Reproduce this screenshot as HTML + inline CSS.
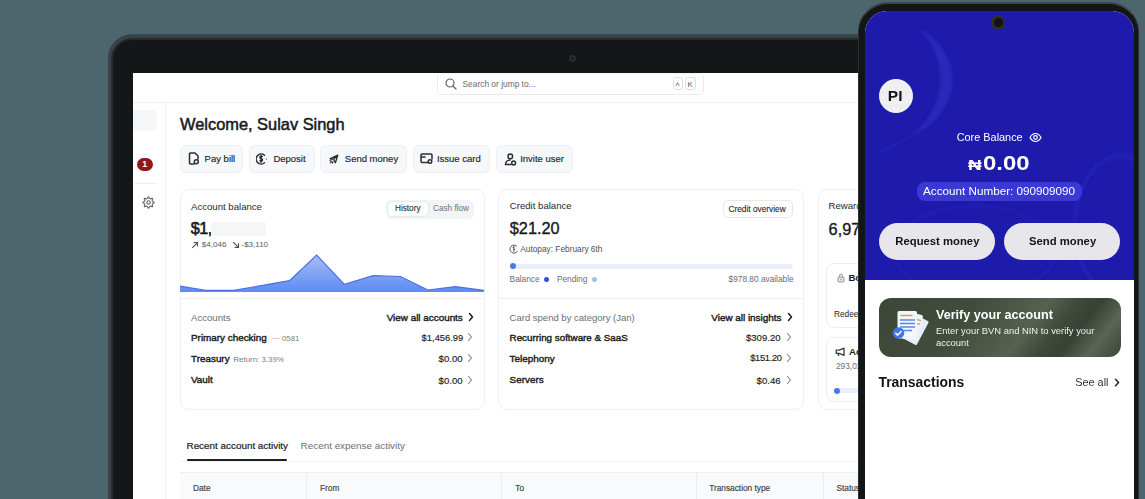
<!DOCTYPE html>
<html><head><meta charset="utf-8"><style>
html,body{margin:0;padding:0;}
body{width:1145px;height:499px;overflow:hidden;position:relative;background:#4d656c;font-family:"Liberation Sans",sans-serif;}
.r{position:absolute;}
.t{position:absolute;line-height:1;white-space:nowrap;}
</style></head><body>
<div class="r" style="left:108px;top:35px;width:900px;height:600px;border-radius:24px 24px 0 0;background:#3c4145;box-shadow:0 -0.6px 0 #27305a;"></div>
<div class="r" style="left:110.8px;top:38.3px;width:900px;height:600px;border-radius:21px 21px 0 0;background:#232c2d;"></div>
<div class="r" style="left:113px;top:40.3px;width:900px;height:600px;border-radius:19px 19px 0 0;background:#131718;"></div>
<div class="r" style="left:568.5px;top:54.5px;width:7px;height:7px;border-radius:50%;background:#2a2e30;"></div>
<div class="r" style="left:570.5px;top:56.5px;width:3px;height:3px;border-radius:50%;background:#151819;"></div>
<div class="r" style="left:133px;top:73px;width:850px;height:500px;background:#fff;"></div>
<div class="r" style="left:133px;top:102px;width:1000px;height:1px;background:#eef0f2;"></div>
<div class="r" style="left:436.5px;top:73px;width:267.5px;height:21.5px;border:1px solid #e8eaed;border-top-color:#f4f5f6;border-radius:5px;background:#fff;box-sizing:border-box;"></div>
<svg class="r" style="left:444.5px;top:78px" width="12" height="12" viewBox="0 0 12 12"><circle cx="5" cy="5" r="4" fill="none" stroke="#5f646a" stroke-width="1.2"/><path d="M8 8 L11 11" stroke="#5f646a" stroke-width="1.3" stroke-linecap="round"/></svg>
<div class="t " style="left:462.50px;top:79.99px;font-size:8.4px;font-weight:400;color:#666b71;">Search or jump to...</div>
<div class="r" style="left:673px;top:77px;width:9.5px;height:13px;border:1px solid #dcdfe3;border-radius:3px;box-sizing:border-box;"></div>
<div class="t " style="left:675.60px;top:82.30px;font-size:8.5px;font-weight:400;color:#555a60;">^</div>
<div class="r" style="left:684.5px;top:77px;width:11px;height:13px;border:1px solid #dcdfe3;border-radius:3px;box-sizing:border-box;"></div>
<div class="t " style="left:687.40px;top:80.51px;font-size:7.9px;font-weight:400;color:#555a60;">K</div>
<div class="r" style="left:165px;top:102px;width:1px;height:400px;background:#f0f1f3;"></div>
<div class="r" style="left:133px;top:110px;width:24px;height:21px;background:#f6f7f8;border-radius:0 5px 5px 0;"></div>
<div class="r" style="left:137px;top:158px;width:16px;height:13px;background:#8e1a15;border-radius:7px;"></div>
<div class="t " style="left:142.30px;top:160.06px;font-size:8.9px;font-weight:700;color:#ffffff;">1</div>
<div class="r" style="left:134px;top:183px;width:23px;height:1px;background:#eef0f2;"></div>
<svg class="r" style="left:141.9px;top:196.2px" width="13" height="13" viewBox="0 0 13 13"><path fill="none" stroke="#63686e" stroke-width="1.1" stroke-linejoin="round" d="M10.72 5.66 L12.07 5.93 L12.07 7.07 L10.72 7.34 L10.08 8.89 L10.84 10.04 L10.04 10.84 L8.89 10.08 L7.34 10.72 L7.07 12.07 L5.93 12.07 L5.66 10.72 L4.11 10.08 L2.96 10.84 L2.16 10.04 L2.92 8.89 L2.28 7.34 L0.93 7.07 L0.93 5.93 L2.28 5.66 L2.92 4.11 L2.16 2.96 L2.96 2.16 L4.11 2.92 L5.66 2.28 L5.93 0.93 L7.07 0.93 L7.34 2.28 L8.89 2.92 L10.04 2.16 L10.84 2.96 L10.08 4.11Z"/><circle cx="6.5" cy="6.5" r="1.7" fill="none" stroke="#63686e" stroke-width="1.1"/></svg>
<div class="t " style="left:180.00px;top:115.71px;font-size:16.4px;font-weight:400;color:#17191c;-webkit-text-stroke:0.5px #17191c;">Welcome, Sulav Singh</div>
<div class="r" style="left:179.5px;top:145px;width:63px;height:27.5px;background:#f7f8f9;border:1px solid #eceef0;border-radius:6px;box-sizing:border-box;"></div>
<div class="r" style="left:248.5px;top:145px;width:66px;height:27.5px;background:#f7f8f9;border:1px solid #eceef0;border-radius:6px;box-sizing:border-box;"></div>
<div class="r" style="left:320px;top:145px;width:87px;height:27.5px;background:#f7f8f9;border:1px solid #eceef0;border-radius:6px;box-sizing:border-box;"></div>
<div class="r" style="left:412.5px;top:145px;width:77.5px;height:27.5px;background:#f7f8f9;border:1px solid #eceef0;border-radius:6px;box-sizing:border-box;"></div>
<div class="r" style="left:495.5px;top:145px;width:77.5px;height:27.5px;background:#f7f8f9;border:1px solid #eceef0;border-radius:6px;box-sizing:border-box;"></div>
<div class="t " style="left:204.60px;top:153.65px;font-size:9.5px;font-weight:400;color:#22262a;-webkit-text-stroke:0.15px #22262a;">Pay bill</div>
<div class="t " style="left:273.40px;top:153.65px;font-size:9.5px;font-weight:400;color:#22262a;-webkit-text-stroke:0.15px #22262a;">Deposit</div>
<div class="t " style="left:344.80px;top:153.65px;font-size:9.5px;font-weight:400;color:#22262a;-webkit-text-stroke:0.15px #22262a;">Send money</div>
<div class="t " style="left:436.90px;top:153.65px;font-size:9.5px;font-weight:400;color:#22262a;-webkit-text-stroke:0.15px #22262a;">Issue card</div>
<div class="t " style="left:520.20px;top:153.65px;font-size:9.5px;font-weight:400;color:#22262a;-webkit-text-stroke:0.15px #22262a;">Invite user</div>
<svg class="r" style="left:188px;top:152px" width="12" height="13" viewBox="0 0 12 13"><path fill="none" stroke="#2a2e33" stroke-width="1.5" stroke-linecap="round" stroke-linejoin="round" d="M6 12H2.5a1 1 0 0 1-1-1V2a1 1 0 0 1 1-1h4.5l3 3v3"/><circle cx="8.3" cy="9.8" r="2" fill="none" stroke="#2a2e33" stroke-width="1.5" stroke-linecap="round" stroke-linejoin="round"/></svg>
<svg class="r" style="left:256px;top:153px" width="12" height="12" viewBox="0 0 12 12"><path fill="none" stroke="#2a2e33" stroke-width="1.5" stroke-linecap="round" stroke-linejoin="round" d="M8.5 2.2A5 5 0 1 0 8.5 9.8"/><path fill="none" stroke="#2a2e33" stroke-width="1.5" stroke-linecap="round" stroke-linejoin="round" d="M6.2 3.5c-1.2-.4-2.3.1-2.3.9 0 1.6 2.6 1 2.6 2.6 0 .9-1.2 1.3-2.5.8M5 2.6v6.6"/><circle cx="10.5" cy="6" r=".6" fill="#2a2e33"/></svg>
<svg class="r" style="left:329px;top:154px" width="10" height="10" viewBox="0 0 10 10"><path fill="none" stroke="#2a2e33" stroke-width="1.3" stroke-linejoin="round" d="M1.2 4.6L8.8 1.2 6.4 8.8 4.6 5.4z M4.6 5.4L8.8 1.2"/><path fill="none" stroke="#2a2e33" stroke-width="1.2" stroke-linecap="round" d="M1.3 8.7l1.6-1.6M3.2 9l.9-.9M1 6.6l.9-.9"/></svg>
<svg class="r" style="left:420px;top:153px" width="13" height="11" viewBox="0 0 13 11"><path fill="none" stroke="#2a2e33" stroke-width="1.5" stroke-linecap="round" stroke-linejoin="round" d="M8 9.5H2a1 1 0 0 1-1-1v-6.5a1 1 0 0 1 1-1h9a1 1 0 0 1 1 1v4 M1 4h4"/><circle cx="10" cy="8.5" r="1.8" fill="none" stroke="#2a2e33" stroke-width="1.5" stroke-linecap="round" stroke-linejoin="round"/></svg>
<svg class="r" style="left:503.5px;top:152.5px" width="13" height="13" viewBox="0 0 13 13"><circle cx="6.3" cy="3.4" r="2.3" fill="none" stroke="#2a2e33" stroke-width="1.5" stroke-linecap="round" stroke-linejoin="round"/><path fill="none" stroke="#2a2e33" stroke-width="1.5" stroke-linecap="round" stroke-linejoin="round" d="M1.5 11.5c0-2.6 1.9-4.6 4.6-4.6"/><circle cx="9.6" cy="10" r="1.9" fill="none" stroke="#2a2e33" stroke-width="1.5" stroke-linecap="round" stroke-linejoin="round"/><path fill="none" stroke="#2a2e33" stroke-width="1.5" stroke-linecap="round" stroke-linejoin="round" d="M1.5 11.5h5.5"/></svg>
<div class="r" style="left:179.5px;top:188.5px;width:305px;height:221px;background:#fff;border:1px solid #eef0f2;border-radius:9px;box-sizing:border-box;"></div>
<div class="r" style="left:498px;top:188.5px;width:305.5px;height:221px;background:#fff;border:1px solid #eef0f2;border-radius:9px;box-sizing:border-box;"></div>
<div class="r" style="left:817.5px;top:188.5px;width:280px;height:221px;background:#fff;border:1px solid #eef0f2;border-radius:9px;box-sizing:border-box;"></div>
<div class="r" style="left:180.5px;top:298px;width:303px;height:1px;background:#eef0f2;"></div>
<div class="r" style="left:499px;top:298px;width:303.5px;height:1px;background:#eef0f2;"></div>
<div class="t " style="left:191.00px;top:201.57px;font-size:9.6px;font-weight:400;color:#26292d;">Account balance</div>
<div class="r" style="left:385.5px;top:199.5px;width:88px;height:19px;background:#f3f4f6;border-radius:6px;"></div>
<div class="r" style="left:386.5px;top:200.5px;width:42.5px;height:16.9px;background:#fff;border:1px solid #e6e8eb;border-radius:5px;box-sizing:border-box;"></div>
<div class="t " style="left:395.00px;top:205.45px;font-size:8.2px;font-weight:400;color:#2a2d31;-webkit-text-stroke:0.1px #2a2d31;">History</div>
<div class="t " style="left:433.00px;top:205.45px;font-size:8.2px;font-weight:400;color:#6d7177;">Cash flow</div>
<div class="t " style="left:190.80px;top:220.39px;font-size:16.3px;font-weight:400;color:#17191c;letter-spacing:-0.6px;-webkit-text-stroke:0.55px #17191c;">$1,</div>
<div class="r" style="left:211px;top:222.2px;width:55px;height:13.6px;background:#f5f6f7;"></div>
<svg class="r" style="left:191px;top:240.5px" width="8" height="8" viewBox="0 0 8 8"><path d="M1.2 6.8L6.5 1.5M2.5 1.5h4v4" fill="none" stroke="#4f5358" stroke-width="1.1"/></svg>
<div class="t " style="left:201.80px;top:240.64px;font-size:8.1px;font-weight:400;color:#55595e;">$4,046</div>
<svg class="r" style="left:231.5px;top:240.5px" width="8" height="8" viewBox="0 0 8 8"><path d="M1.2 1.2L6.5 6.5M2.5 6.5h4v-4" fill="none" stroke="#4f5358" stroke-width="1.1"/></svg>
<div class="t " style="left:241.50px;top:240.72px;font-size:8.0px;font-weight:400;color:#55595e;">-$3,110</div>
<svg class="r" style="left:180px;top:250px" width="304" height="42" viewBox="0 0 304 42"><defs><linearGradient id="g1" x1="0" y1="0" x2="0" y2="1"><stop offset="0" stop-color="#a7bdf8"/><stop offset="1" stop-color="#5d8bf1"/></linearGradient></defs><path d="M0.0 36.2 L25.7 40.4 L53.7 40.4 L109.6 30.6 L136.6 5.0 L164.4 34.3 L193.2 25.7 L220.5 26.5 L247.9 40.0 L275.3 36.6 L304.0 40.4 L304 42 L0 42 Z" fill="url(#g1)"/><path d="M0.0 36.2 L25.7 40.4 L53.7 40.4 L109.6 30.6 L136.6 5.0 L164.4 34.3 L193.2 25.7 L220.5 26.5 L247.9 40.0 L275.3 36.6 L304.0 40.4" fill="none" stroke="#4b70e4" stroke-width="1.2"/></svg>
<div class="t " style="left:191.00px;top:312.67px;font-size:9.6px;font-weight:400;color:#6a6e74;">Accounts</div>
<div class="t " style="left:386.70px;top:312.61px;font-size:9.9px;font-weight:400;color:#1b1d20;-webkit-text-stroke:0.42px #1b1d20;">View all accounts</div>
<div class="t " style="left:191.00px;top:332.81px;font-size:9.9px;font-weight:400;color:#1b1d20;-webkit-text-stroke:0.42px #1b1d20;">Primary checking</div>
<div class="t " style="left:271.50px;top:334.51px;font-size:7.9px;font-weight:400;color:#7a7e84;letter-spacing:-0.6px;">&middot;&middot;&middot;&middot;</div>
<div class="t " style="left:282.00px;top:334.59px;font-size:7.8px;font-weight:400;color:#7a7e84;">0581</div>
<div class="t " style="left:421.60px;top:333.24px;font-size:9.4px;font-weight:400;color:#1b1d20;-webkit-text-stroke:0.15px #1b1d20;">$1,456.99</div>
<div class="t " style="left:191.00px;top:353.81px;font-size:9.9px;font-weight:400;color:#1b1d20;-webkit-text-stroke:0.42px #1b1d20;">Treasury</div>
<div class="t " style="left:233.40px;top:355.51px;font-size:7.9px;font-weight:400;color:#7a7e84;">Return: 3.39%</div>
<div class="t " style="left:438.60px;top:354.07px;font-size:9.6px;font-weight:400;color:#1b1d20;-webkit-text-stroke:0.15px #1b1d20;">$0.00</div>
<div class="t " style="left:191.00px;top:375.41px;font-size:9.9px;font-weight:400;color:#1b1d20;-webkit-text-stroke:0.42px #1b1d20;">Vault</div>
<div class="t " style="left:438.60px;top:375.67px;font-size:9.6px;font-weight:400;color:#1b1d20;-webkit-text-stroke:0.15px #1b1d20;">$0.00</div>
<svg class="r" style="left:467.5px;top:312.2px" width="6" height="10" viewBox="0 0 6 10"><path d="M1.5 1.5L4.5 5 1.5 8.5" fill="none" stroke="#1b1d20" stroke-width="1.5" stroke-linecap="round" stroke-linejoin="round"/></svg>
<svg class="r" style="left:467px;top:332.4px" width="6" height="10" viewBox="0 0 6 10"><path d="M1.5 1.5L4.5 5 1.5 8.5" fill="none" stroke="#7d8187" stroke-width="1.1" stroke-linecap="round" stroke-linejoin="round"/></svg>
<svg class="r" style="left:467px;top:353.4px" width="6" height="10" viewBox="0 0 6 10"><path d="M1.5 1.5L4.5 5 1.5 8.5" fill="none" stroke="#7d8187" stroke-width="1.1" stroke-linecap="round" stroke-linejoin="round"/></svg>
<svg class="r" style="left:467px;top:375px" width="6" height="10" viewBox="0 0 6 10"><path d="M1.5 1.5L4.5 5 1.5 8.5" fill="none" stroke="#7d8187" stroke-width="1.1" stroke-linecap="round" stroke-linejoin="round"/></svg>
<div class="t " style="left:509.80px;top:201.07px;font-size:9.6px;font-weight:400;color:#26292d;">Credit balance</div>
<div class="r" style="left:722.5px;top:199.5px;width:70px;height:18.5px;background:#fff;border:1px solid #e6e8eb;border-radius:5px;box-sizing:border-box;"></div>
<div class="t " style="left:728.50px;top:205.17px;font-size:8.3px;font-weight:400;color:#22262a;-webkit-text-stroke:0.1px #22262a;">Credit overview</div>
<div class="t " style="left:509.80px;top:220.29px;font-size:16.3px;font-weight:400;color:#17191c;-webkit-text-stroke:0.35px #17191c;">$21.20</div>
<svg class="r" style="left:508.5px;top:244px" width="10" height="10" viewBox="0 0 10 10"><path d="M8 2.5A4 4 0 1 0 8.5 7" fill="none" stroke="#555" stroke-width="1"/><path d="M5.5 3c-.8-.3-1.6 0-1.6.6 0 1.2 1.8.7 1.8 1.8 0 .6-.8.9-1.7.5M4.8 2.2v5.6" fill="none" stroke="#555" stroke-width=".9"/></svg>
<div class="t " style="left:520.30px;top:245.17px;font-size:8.3px;font-weight:400;color:#4b4f55;">Autopay: February 6th</div>
<div class="r" style="left:509.5px;top:263.5px;width:283px;height:5px;background:#e9effd;border-radius:3px;"></div>
<div class="r" style="left:509.5px;top:263px;width:6px;height:6px;background:#4d78e8;border-radius:50%;"></div>
<div class="t " style="left:509.60px;top:275.37px;font-size:8.3px;font-weight:400;color:#6a6e74;">Balance</div>
<div class="r" style="left:543.5px;top:277px;width:5px;height:5px;background:#3350d0;border-radius:50%;"></div>
<div class="t " style="left:556.90px;top:275.37px;font-size:8.3px;font-weight:400;color:#6a6e74;">Pending</div>
<div class="r" style="left:591.8px;top:277px;width:5px;height:5px;background:#a9bdf3;border-radius:50%;"></div>
<div class="t " style="left:728.60px;top:275.37px;font-size:8.3px;font-weight:400;color:#6a6e74;">$978.80 available</div>
<div class="t " style="left:509.60px;top:312.75px;font-size:9.5px;font-weight:400;color:#6a6e74;">Card spend by category (Jan)</div>
<div class="t " style="left:711.30px;top:312.61px;font-size:9.9px;font-weight:400;color:#1b1d20;-webkit-text-stroke:0.42px #1b1d20;">View all insights</div>
<div class="t " style="left:509.60px;top:332.90px;font-size:9.8px;font-weight:400;color:#1b1d20;-webkit-text-stroke:0.42px #1b1d20;">Recurring software &amp; SaaS</div>
<div class="t " style="left:745.90px;top:333.07px;font-size:9.6px;font-weight:400;color:#1b1d20;-webkit-text-stroke:0.15px #1b1d20;">$309.20</div>
<div class="t " style="left:509.60px;top:353.81px;font-size:9.9px;font-weight:400;color:#1b1d20;-webkit-text-stroke:0.42px #1b1d20;">Telephony</div>
<div class="t " style="left:750.20px;top:354.32px;font-size:9.3px;font-weight:400;color:#1b1d20;letter-spacing:-0.3px;-webkit-text-stroke:0.15px #1b1d20;">$151.20</div>
<div class="t " style="left:509.60px;top:375.41px;font-size:9.9px;font-weight:400;color:#1b1d20;-webkit-text-stroke:0.42px #1b1d20;">Servers</div>
<div class="t " style="left:756.60px;top:375.67px;font-size:9.6px;font-weight:400;color:#1b1d20;-webkit-text-stroke:0.15px #1b1d20;">$0.46</div>
<svg class="r" style="left:786.5px;top:312.2px" width="6" height="10" viewBox="0 0 6 10"><path d="M1.5 1.5L4.5 5 1.5 8.5" fill="none" stroke="#1b1d20" stroke-width="1.5" stroke-linecap="round" stroke-linejoin="round"/></svg>
<svg class="r" style="left:786px;top:332.4px" width="6" height="10" viewBox="0 0 6 10"><path d="M1.5 1.5L4.5 5 1.5 8.5" fill="none" stroke="#7d8187" stroke-width="1.1" stroke-linecap="round" stroke-linejoin="round"/></svg>
<svg class="r" style="left:786px;top:353.4px" width="6" height="10" viewBox="0 0 6 10"><path d="M1.5 1.5L4.5 5 1.5 8.5" fill="none" stroke="#7d8187" stroke-width="1.1" stroke-linecap="round" stroke-linejoin="round"/></svg>
<svg class="r" style="left:786px;top:375px" width="6" height="10" viewBox="0 0 6 10"><path d="M1.5 1.5L4.5 5 1.5 8.5" fill="none" stroke="#7d8187" stroke-width="1.1" stroke-linecap="round" stroke-linejoin="round"/></svg>
<div class="t " style="left:828.60px;top:201.07px;font-size:9.6px;font-weight:400;color:#26292d;">Rewards</div>
<div class="t " style="left:828.60px;top:220.79px;font-size:16.3px;font-weight:400;color:#17191c;-webkit-text-stroke:0.35px #17191c;">6,970</div>
<div class="r" style="left:826px;top:263px;width:200px;height:65px;background:#fff;border:1px solid #eceef0;border-radius:8px;box-sizing:border-box;"></div>
<div class="r" style="left:826px;top:336.5px;width:200px;height:65px;background:#fff;border:1px solid #eceef0;border-radius:8px;box-sizing:border-box;"></div>
<svg class="r" style="left:837px;top:273.3px" width="8" height="9.5" viewBox="0 0 8 9.5"><rect x="1" y="4" width="6" height="5" rx="1.2" fill="#e4e5e8" stroke="#8d9197" stroke-width="1"/><path d="M2.4 4V2.8a1.6 1.6 0 0 1 3.2 0V4" fill="none" stroke="#8d9197" stroke-width="1"/><circle cx="4" cy="6.5" r=".7" fill="#8d9197"/></svg>
<div class="t " style="left:848.40px;top:272.87px;font-size:9.6px;font-weight:700;color:#1b1d20;">Boost</div>
<div class="t " style="left:834.00px;top:310.17px;font-size:8.3px;font-weight:400;color:#22262a;">Redeem</div>
<svg class="r" style="left:834.5px;top:346.5px" width="11" height="10" viewBox="0 0 11 10"><path d="M1.2 3.2h3L9 1.2v7.2L4.2 6.4h-3z M3 6.4l.8 2.6" fill="none" stroke="#3a3d42" stroke-width="1.3" stroke-linejoin="round"/></svg>
<div class="t " style="left:849.00px;top:346.87px;font-size:9.6px;font-weight:700;color:#1b1d20;">Ads</div>
<div class="t " style="left:836.00px;top:362.27px;font-size:8.3px;font-weight:400;color:#6a6e74;">293,020</div>
<div class="r" style="left:834px;top:388px;width:100px;height:5px;background:#e9effd;border-radius:3px;"></div>
<div class="r" style="left:834px;top:387.5px;width:6px;height:6px;background:#4d78e8;border-radius:50%;"></div>
<div class="t " style="left:186.50px;top:441.41px;font-size:9.9px;font-weight:400;color:#1e2124;-webkit-text-stroke:0.2px #1e2124;">Recent account activity</div>
<div class="t " style="left:300.60px;top:441.41px;font-size:9.9px;font-weight:400;color:#6a6e74;">Recent expense activity</div>
<div class="r" style="left:186.5px;top:459px;width:100.5px;height:2px;background:#1e2124;border-radius:1px;"></div>
<div class="r" style="left:179.5px;top:461px;width:700px;height:1px;background:#f1f2f4;"></div>
<div class="r" style="left:179.5px;top:472px;width:700px;height:40px;background:#f9fafb;border-top:1px solid #eceef0;box-sizing:border-box;"></div>
<div class="r" style="left:306.3px;top:473px;width:1px;height:40px;background:#eceef0;"></div>
<div class="r" style="left:501px;top:473px;width:1px;height:40px;background:#eceef0;"></div>
<div class="r" style="left:695.6px;top:473px;width:1px;height:40px;background:#eceef0;"></div>
<div class="r" style="left:823px;top:473px;width:1px;height:40px;background:#eceef0;"></div>
<div class="t " style="left:193.00px;top:484.47px;font-size:8.3px;font-weight:400;color:#3a3d42;-webkit-text-stroke:0.15px #3a3d42;">Date</div>
<div class="t " style="left:320.00px;top:484.47px;font-size:8.3px;font-weight:400;color:#3a3d42;-webkit-text-stroke:0.15px #3a3d42;">From</div>
<div class="t " style="left:515.30px;top:484.47px;font-size:8.3px;font-weight:400;color:#3a3d42;-webkit-text-stroke:0.15px #3a3d42;">To</div>
<div class="t " style="left:709.20px;top:484.47px;font-size:8.3px;font-weight:400;color:#3a3d42;-webkit-text-stroke:0.15px #3a3d42;">Transaction type</div>
<div class="t " style="left:836.50px;top:484.47px;font-size:8.3px;font-weight:400;color:#3a3d42;-webkit-text-stroke:0.15px #3a3d42;">Status</div>
<div class="r" style="left:858.3px;top:2px;width:280.7px;height:600px;border-radius:30px 30px 0 0;background:#121617;border-top:2.6px solid #40454a;border-left:1.2px solid #2b3033;border-right:1px solid #2b3033;box-sizing:border-box;"></div>
<div class="r" style="left:865px;top:11px;width:269px;height:600px;border-radius:22px 22px 0 0;background:#fff;overflow:hidden;"><div style="position:absolute;left:0;top:0;width:269px;height:269px;background:#1e1aab;"></div><svg style="position:absolute;left:0;top:0" width="269" height="269" viewBox="0 0 269 269"><defs><filter id="bl"><feGaussianBlur stdDeviation="1.5"/></filter></defs><g filter="url(#bl)"><path d="M50 15 C98 38 104 100 43 127 C86 96 84 42 50 15Z" fill="#3236cc" opacity=".5"/><path d="M43 127 C30 135 20 140 10 142" fill="none" stroke="#2c30c4" stroke-width="2" opacity=".5"/><ellipse cx="255" cy="215" rx="45" ry="70" fill="none" stroke="#272bbf" stroke-width="4" opacity=".5"/><ellipse cx="110" cy="240" rx="80" ry="45" fill="none" stroke="#272bbf" stroke-width="3" opacity=".4"/></g></svg></div>
<div class="r" style="left:990.8px;top:15.2px;width:14.4px;height:14.4px;border-radius:50%;background:#2b2f30;"></div>
<div class="r" style="left:993.5px;top:18px;width:9px;height:9px;border-radius:50%;background:#101213;"></div>
<div class="r" style="left:878.5px;top:78.5px;width:34px;height:34px;background:#efeff2;border-radius:50%;"></div>
<div class="t " style="left:887.80px;top:88.07px;font-size:15.5px;font-weight:700;color:#141414;">PI</div>
<div class="t " style="left:956.70px;top:132.37px;font-size:10.9px;font-weight:400;color:#ffffff;">Core Balance</div>
<svg class="r" style="left:1029px;top:132px" width="13" height="11" viewBox="0 0 13 11"><path d="M1 5.5C2.5 2.8 4.5 1.5 6.5 1.5S10.5 2.8 12 5.5C10.5 8.2 8.5 9.5 6.5 9.5S2.5 8.2 1 5.5z" fill="none" stroke="#fff" stroke-width="1.2"/><circle cx="6.5" cy="5.5" r="1.8" fill="none" stroke="#fff" stroke-width="1.2"/></svg>
<div class="t " style="left:968.30px;top:157.23px;font-size:15.2px;font-weight:700;color:#ffffff;transform:scaleX(1.25);transform-origin:0 0;">&#8358;</div>
<div class="t " style="left:983.40px;top:152.75px;font-size:20.6px;font-weight:700;color:#ffffff;transform:scaleX(1.16);transform-origin:0 0;">0.00</div>
<div class="r" style="left:917px;top:181.5px;width:165px;height:19px;background:#3a39d4;border-radius:8px;"></div>
<div class="t " style="left:923.00px;top:184.99px;font-size:11.7px;font-weight:400;color:#ffffff;">Account Number: 090909090</div>
<div class="r" style="left:878.5px;top:222.6px;width:116.5px;height:37px;background:#e7e7eb;border-radius:19px;"></div>
<div class="r" style="left:1003.5px;top:222.6px;width:116.5px;height:37px;background:#e7e7eb;border-radius:19px;"></div>
<div class="t " style="left:895.30px;top:235.73px;font-size:11.3px;font-weight:700;color:#141414;">Request money</div>
<div class="t " style="left:1029.00px;top:235.73px;font-size:11.3px;font-weight:700;color:#141414;">Send money</div>
<div class="r" style="left:878.5px;top:297.5px;width:242px;height:59.5px;background:linear-gradient(128deg,#3c4739 0%,#414c3d 35%,#4d5847 50%,#576150 60%,#3f4a3b 70%,#374235 78%,#5b6456 88%,#4b5545 94%,#3e483a 100%);border-radius:12px;"></div>
<svg class="r" style="left:890px;top:309px" width="40" height="36" viewBox="0 0 40 36"><g transform="rotate(28 14 30)"><rect x="9" y="3" width="19" height="27" rx="1.5" fill="#e6ecf8"/></g><g transform="rotate(14 14 30)"><rect x="8" y="2.5" width="19" height="27" rx="1.5" fill="#eef2fb"/><path d="M22 8l4 0M22 12l4 0" stroke="#e8924a" stroke-width="1.2"/></g><rect x="7.5" y="2" width="19.5" height="27.5" rx="1.5" fill="#f3f6fc"/><path d="M10.5 6.5h12" stroke="#e8924a" stroke-width="1.4"/><path d="M10 11h15M10 14.5h15M10 18h15M10 21.5h12" stroke="#5b86e6" stroke-width="1.5"/><circle cx="8.5" cy="24" r="5.8" fill="#3d78e6"/><path d="M5.8 24.2l1.9 1.9 3.4-3.6" fill="none" stroke="#fff" stroke-width="1.5" stroke-linecap="round" stroke-linejoin="round"/></svg>
<div class="t " style="left:936.00px;top:308.83px;font-size:12.6px;font-weight:700;color:#ffffff;">Verify your account</div>
<div class="t " style="left:936.00px;top:325.64px;font-size:9.4px;font-weight:400;color:#eef0ee;">Enter your BVN and NIN to verify your</div>
<div class="t " style="left:936.00px;top:338.04px;font-size:9.4px;font-weight:400;color:#eef0ee;">account</div>
<div class="t " style="left:878.50px;top:375.83px;font-size:13.9px;font-weight:700;color:#141414;">Transactions</div>
<div class="t " style="left:1075.20px;top:377.07px;font-size:10.9px;font-weight:400;color:#333;">See all</div>
<svg class="r" style="left:1114px;top:378px" width="6" height="9" viewBox="0 0 6 9"><path d="M1.5 1.2L4.5 4.5 1.5 7.8" fill="none" stroke="#222" stroke-width="1.5" stroke-linecap="round"/></svg>
</body></html>
